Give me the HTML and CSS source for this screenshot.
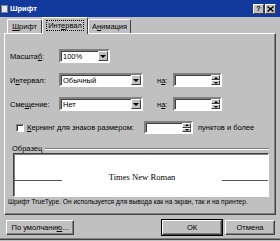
FILE: index.html
```html
<!DOCTYPE html>
<html lang="ru">
<head>
    <meta charset="UTF-8">
    <title>Шрифт</title>
    <link rel="stylesheet" href="styles.css">
</head>
<body>
    <div class="window">
        <div class="titlebar">
            <span class="app-icon"></span>
            <span class="title">Шрифт</span>
            <div class="title-btns">
                <span class="tbtn">?</span>
                <span class="tbtn">
                    <svg width="7" height="6" viewBox="0 0 7 6"><path d="M0.5 0.5 L6.5 5.5 M6.5 0.5 L0.5 5.5" stroke="#000" stroke-width="1.4"/></svg>
                </span>
            </div>
        </div>

        <div class="tabs">
            <div class="tab"><u>Ш</u>рифт</div>
            <div class="tab active"><span class="focus">Инт<u>е</u>рвал</span></div>
            <div class="tab">А<u>н</u>имация</div>
        </div>

        <div class="panel">
            <div class="row">
                <span class="lbl">Масшта<u>б</u>:</span>
                <div class="combo short">
                    <span class="combo-value">100%</span>
                    <span class="combo-btn"><i class="arrow-down"></i></span>
                </div>
            </div>
            <div class="row">
                <span class="lbl">И<u>н</u>тервал:</span>
                <div class="combo long">
                    <span class="combo-value">Обычный</span>
                    <span class="combo-btn"><i class="arrow-down"></i></span>
                </div>
                <span class="na">н<u>а</u>:</span>
                <div class="spin">
                    <span class="spin-value"></span>
                    <span class="spin-btns">
                        <span class="spin-part"><i class="arrow-up"></i></span>
                        <span class="spin-part"><i class="arrow-down small"></i></span>
                    </span>
                </div>
            </div>
            <div class="row">
                <span class="lbl">Сме<u>щ</u>ение:</span>
                <div class="combo long">
                    <span class="combo-value">Нет</span>
                    <span class="combo-btn"><i class="arrow-down"></i></span>
                </div>
                <span class="na">н<u>а</u>:</span>
                <div class="spin">
                    <span class="spin-value"></span>
                    <span class="spin-btns">
                        <span class="spin-part"><i class="arrow-up"></i></span>
                        <span class="spin-part"><i class="arrow-down small"></i></span>
                    </span>
                </div>
            </div>
            <div class="row check-row">
                <span class="checkbox"></span>
                <span class="check-label"><u>К</u>ернинг для знаков размером:</span>
                <div class="spin">
                    <span class="spin-value"></span>
                    <span class="spin-btns">
                        <span class="spin-part"><i class="arrow-up"></i></span>
                        <span class="spin-part"><i class="arrow-down small"></i></span>
                    </span>
                </div>
                <span class="after">пунктов и более</span>
            </div>

            <div class="group-head">
                <span>Образец</span>
                <span class="etched"></span>
            </div>
            <div class="sample">
                <span class="sample-line"></span>
                <span class="sample-text">Times New Roman</span>
                <span class="sample-line"></span>
            </div>
            <div class="info">Шрифт TrueType. Он используется для вывода как на экран, так и на принтер.</div>
        </div>

        <div class="buttons">
            <button class="btn wide">По умолчани<u>ю</u>...</button>
            <span class="spacer"></span>
            <button class="btn ok">ОК</button>
            <button class="btn cancel">Отмена</button>
        </div>
    </div>
</body>
</html>
```

FILE: styles.css
```css
* {
    box-sizing: border-box;
}
body {
    margin: 0;
    width: 280px;
    height: 241px;
    overflow: hidden;
    background: #c0c0c0;
    font-family: "Liberation Sans", Arial, sans-serif;
    font-size: 7.5px;
    color: #000;
}
u {
    text-decoration-thickness: 1px;
    text-underline-offset: 1px;
}
.window {
    height: 240px;
    border-bottom: 1px solid #404040;
    box-shadow: inset 0 -1px 0 #808080;
}
.titlebar {
    height: 17px;
    background: #12399c;
    display: flex;
    align-items: center;
    padding: 0 4px 0 1px;
    color: #fff;
}
.app-icon {
    width: 7px;
    height: 8px;
    background: #e8e8e8;
    border: 1px solid #808080;
    margin-right: 2px;
}
.title {
    flex: 1;
    font-weight: bold;
    font-size: 7.5px;
}
.title-btns {
    display: flex;
    gap: 1px;
}
.tbtn {
    width: 11px;
    height: 10px;
    background: #c0c0c0;
    border: 1px solid;
    border-color: #fff #404040 #404040 #fff;
    display: flex;
    align-items: center;
    justify-content: center;
    color: #000;
    font-weight: bold;
    font-size: 7px;
    line-height: 1;
}

/* вкладки */
.tabs {
    display: flex;
    align-items: flex-end;
    height: 16px;
    padding-left: 7px;
    position: relative;
    z-index: 1;
}
.tab {
    height: 14px;
    padding: 0 4px;
    display: flex;
    align-items: center;
    justify-content: center;
    border: 1px solid;
    border-bottom: none;
    border-color: #fff #404040 #404040 #fff;
    border-radius: 2px 2px 0 0;
}
.tab:nth-child(1) {
    width: 35px;
}
.tab:nth-child(3) {
    width: 43px;
}
.tab.active {
    width: 46px;
    height: 17px;
    margin-bottom: -1px;
    background: #c0c0c0;
    padding-bottom: 2px;
}
.focus {
    border: 1px dotted #000;
    padding: 0 1px;
    line-height: 9px;
}

/* панель */
.panel {
    margin-left: 4px;
    width: 272px;
    height: 182px;
    border: 1px solid;
    border-color: #fff #404040 #404040 #fff;
    box-shadow: inset -1px -1px 0 #808080;
    padding: 15px 0 0 2px;
}
.row {
    display: flex;
    align-items: center;
    height: 14px;
    margin-left: 3px;
    margin-bottom: 10px;
}
.lbl {
    width: 49px;
}
.combo,
.spin {
    height: 100%;
    display: flex;
    background: #fff;
    border: 2px solid;
    border-color: #808080 #fff #fff #808080;
    box-shadow: inset 1px 1px 0 #404040;
}
.combo.short {
    width: 51px;
}
.combo.long {
    width: 84px;
}
.combo-value {
    flex: 1;
    padding-left: 2px;
    display: flex;
    align-items: center;
}
.combo-btn {
    width: 10px;
    background: #c0c0c0;
    border: 1px solid;
    border-color: #fff #404040 #404040 #fff;
    display: flex;
    align-items: center;
    justify-content: center;
}
.arrow-down {
    width: 0;
    height: 0;
    border-left: 3px solid transparent;
    border-right: 3px solid transparent;
    border-top: 3px solid #000;
}
.arrow-down.small,
.arrow-up {
    border-left-width: 2px;
    border-right-width: 2px;
    border-top-width: 2px;
}
.arrow-up {
    width: 0;
    height: 0;
    border-left: 2px solid transparent;
    border-right: 2px solid transparent;
    border-bottom: 2px solid #000;
}
.na {
    margin-left: 14px;
    width: 16px;
}
.spin {
    width: 49px;
}
.spin-value {
    flex: 1;
}
.spin-btns {
    width: 9px;
    display: flex;
    flex-direction: column;
}
.spin-part {
    flex: 1;
    background: #c0c0c0;
    border: 1px solid;
    border-color: #fff #404040 #404040 #fff;
    display: flex;
    align-items: center;
    justify-content: center;
}
.check-row {
    height: 13px;
    margin-top: 6px;
}
.checkbox {
    width: 8px;
    height: 8px;
    margin-left: 6px;
    background: #fff;
    border: 1px solid;
    border-color: #808080 #fff #fff #808080;
    box-shadow: inset 1px 1px 0 #404040;
}
.check-label {
    margin-left: 3px;
    width: 117px;
}
.after {
    margin-left: 5px;
}

/* образец */
.group-head {
    display: flex;
    align-items: center;
    height: 9px;
    margin-left: 5px;
    margin-right: 6px;
}
.etched {
    flex: 1;
    height: 2px;
    margin-left: 3px;
    border-top: 1px solid #808080;
    border-bottom: 1px solid #fff;
}
.sample {
    margin-left: 6px;
    width: 256px;
    height: 44px;
    background: #fff;
    border: 1px solid;
    border-color: #404040 #fff #fff #404040;
    box-shadow: inset 1px 1px 0 #808080;
    display: flex;
    align-items: center;
    justify-content: space-between;
}
.sample-line {
    width: 48px;
    height: 11px;
    border-bottom: 1px solid #555;
}
.sample-line:last-child {
    width: 46px;
}
.sample-text {
    font-family: "Liberation Serif", "Times New Roman", serif;
    font-size: 8.6px;
    margin-top: 3px;
}
.info {
    height: 10px;
    line-height: 10px;
    margin-left: 1px;
    font-size: 6.6px;
    white-space: nowrap;
}

/* кнопки */
.buttons {
    display: flex;
    margin-top: 5px;
    padding: 0 5px 0 6px;
    gap: 3px;
}
.spacer {
    flex: 1;
}
.btn {
    height: 15px;
    padding: 0;
    font: inherit;
    color: #000;
    background: #c0c0c0;
    border: 1px solid;
    border-color: #fff #404040 #404040 #fff;
    box-shadow: inset -1px -1px 0 #808080;
}
.btn.wide {
    width: 68px;
}
.btn.ok {
    width: 60px;
    outline: 1px solid #000;
}
.btn.cancel {
    width: 50px;
}
```
